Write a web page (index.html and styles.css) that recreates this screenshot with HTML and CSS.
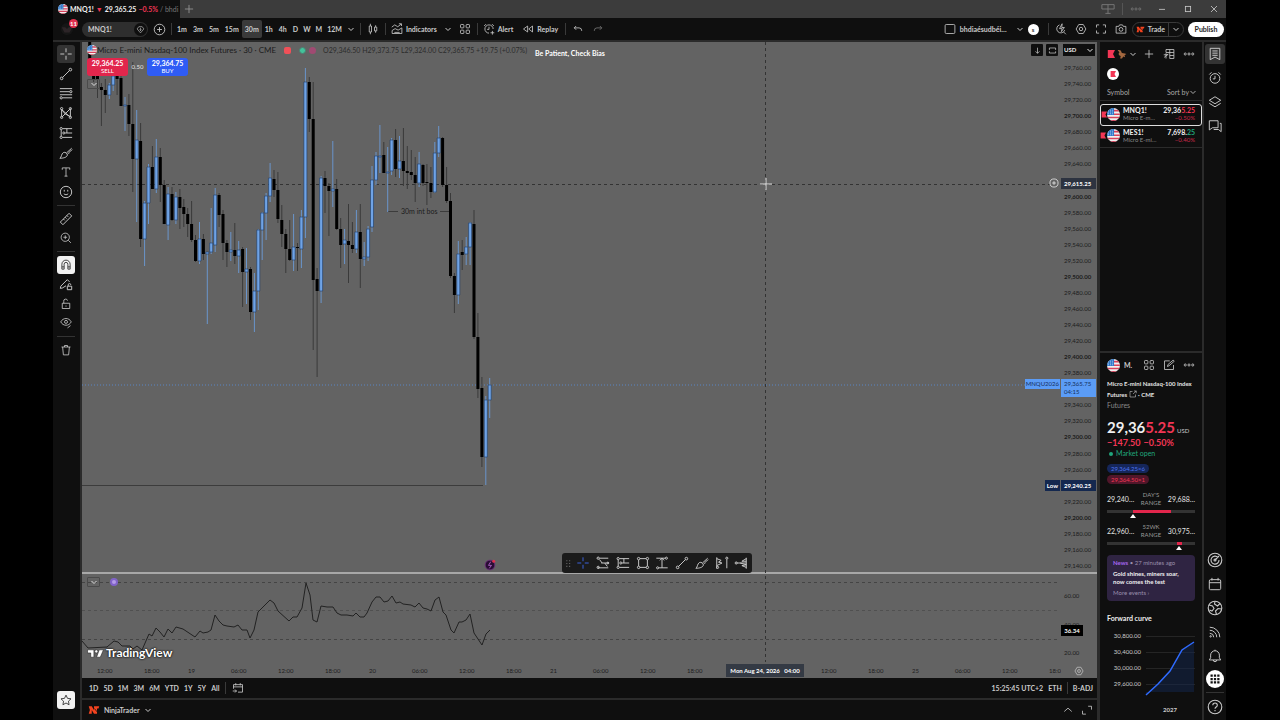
FILE: index.html
```
<!DOCTYPE html>
<html lang="en">
<head>
<meta charset="utf-8">
<title>MNQ1! 29,365.25</title>
<link rel="stylesheet" href="styles.css">
</head>
<body>
<svg class="defs" aria-hidden="true">
  <symbol id="flag" viewBox="0 0 12 12"><clipPath id="fc"><circle cx="6" cy="6" r="6"/></clipPath><g clip-path="url(#fc)"><path fill="#f0f0f0" stroke="none" d="M0 0h12v12H0z"/><path fill="#d8405a" stroke="none" d="M6 1.500h6v1.700H6zM6 5h6v1.500H6zM0 8h12v1.500H0zM0 11h12v1H0z"/><path fill="#2f78c8" stroke="none" d="M0 0h6.500v6.500H0z"/><path stroke="#cfe2ff" stroke-width=".7" stroke-dasharray=".8 1" d="M1 2h5M1 3.700h5M1 5.300h5"/></g></symbol>
  <symbol id="cross" viewBox="0 0 16 16"><path d="M8 1.500v4.500M8 10v4.500M1.500 8H6M10 8h4.500"/></symbol>
  <symbol id="line" viewBox="0 0 16 16"><path d="M4 12l8-8"/><circle cx="3" cy="13" r="1.500"/><circle cx="13" cy="3" r="1.500"/></symbol>
  <symbol id="fib" viewBox="0 0 16 16"><path d="M1 3h14M1 6.500h11M1 10h14M4 13.500h11"/><circle cx="2.500" cy="13.500" r="1.300"/><circle cx="13.500" cy="6.500" r="1.300"/></symbol>
  <symbol id="pattern" viewBox="0 0 16 16"><path d="M3 12V4l4 5 6-6v9L7 9l-4 4M3 4l10 9"/><circle cx="3" cy="3" r="1.300"/><circle cx="13" cy="3" r="1.300"/><circle cx="3" cy="13" r="1.300"/><circle cx="13" cy="13" r="1.300"/></symbol>
  <symbol id="forecast" viewBox="0 0 16 16"><path d="M4 3h11M7 8h8M4 13h11M2.500 4.500v7M9 3v5"/><circle cx="2.500" cy="3" r="1.300"/><circle cx="2.500" cy="13" r="1.300"/><circle cx="5.500" cy="8" r="1.200"/></symbol>
  <symbol id="long" viewBox="0 0 16 16"><path d="M4 2.500h10M6 8h9M2 13.500h12M4 4l3 4M10 8l3 4"/><circle cx="2.500" cy="2.500" r="1.300"/><circle cx="2.500" cy="13" r="1.300"/><circle cx="13.500" cy="8" r="1"/></symbol>
  <symbol id="brush" viewBox="0 0 16 16"><path d="M1 14c2-1 1.500-5 4-6.500 2-1 5 1 4.500 3C9 13 5 14 1 14zM8.500 8l6-5.500M11 9c0-3 2-2 4-5"/></symbol>
  <symbol id="text" viewBox="0 0 16 16"><path d="M3 5V2.500h10V5M8 2.500v11M6 13.500h4"/></symbol>
  <symbol id="smile" viewBox="0 0 16 16"><circle cx="8" cy="8" r="6.500"/><path d="M6 5.500v2M10 5.500v2M5.500 10c1.500 1.500 3.500 1.500 5 0"/></symbol>
  <symbol id="ruler" viewBox="0 0 16 16"><path d="M1.500 11.500l10-10 3 3-10 10zM5 8l1.500 1.500M7 6l1.500 1.500M9 4l1.500 1.500"/></symbol>
  <symbol id="zoomin" viewBox="0 0 16 16"><circle cx="7" cy="7" r="5.500"/><path d="M11 11l3.500 3.500M7 4.500v5M4.500 7h5"/></symbol>
  <symbol id="magnet" viewBox="0 0 16 16"><path d="M2.500 13.500V7a5.500 5.500 0 0 1 11 0v6.500h-3V7a2.500 2.500 0 0 0-5 0v6.500zM2.500 10.500h3M10.500 10.500h3"/></symbol>
  <symbol id="penlock" viewBox="0 0 16 16"><path d="M8 10l-4 2.500-2.500.5.500-2.500L9.500 3 12 5.500M9.500 10.500h5v4h-5zM10.500 10.500V9a1.500 1.500 0 0 1 3 0"/></symbol>
  <symbol id="lock" viewBox="0 0 16 16"><path d="M3 7h10v7H3zM5 7V4.500a2.500 2.500 0 0 1 5-1M8 10v1.500"/></symbol>
  <symbol id="eye" viewBox="0 0 16 16"><path d="M1 6.500c3-6 11-6 14 0-3 6-11 6-14 0zM10 14.500l4-3"/><circle cx="8" cy="6.500" r="2"/></symbol>
  <symbol id="trash" viewBox="0 0 16 16"><path d="M2 4h12M6 4V2h4v2M3.500 4l1 10.500h7l1-10.500"/></symbol>
  <symbol id="star" viewBox="0 0 16 16"><path d="M8 1.500l2 4.300 4.700.6-3.400 3.200.8 4.700L8 12l-4.100 2.300.8-4.700L1.300 6.400 6 5.800z"/></symbol>
  <symbol id="chev" viewBox="0 0 8 8"><path d="M1.500 3L4 5.500 6.500 3"/></symbol>
  <symbol id="chevup" viewBox="0 0 16 16"><path d="M3 10l5-4.500L13 10"/></symbol>
  <symbol id="plus" viewBox="0 0 16 16"><path d="M8 2.500v11M2.500 8h11"/></symbol>
  <symbol id="pluscircle" viewBox="0 0 16 16"><circle cx="8" cy="8" r="6.500"/><path d="M8 5v6M5 8h6"/></symbol>
  <symbol id="gem" viewBox="0 0 16 16"><path d="M5 3h6l3 4-6 7-6-7z"/><path d="M8 5v5M6 8l2 2 2-2"/></symbol>
  <symbol id="candles" viewBox="0 0 16 16"><path d="M3 4h3v8H3zM4.500 1v3M4.500 12v3M10 5.500h3v5h-3zM11.500 3v2.500M11.500 10.500V13"/></symbol>
  <symbol id="indic" viewBox="0 0 16 16"><path d="M1.500 14v-4l4-2.500 4 2 5-3V14zM1 5.500l4-3 4 2.500 4.500-3.500M10.500 1H14v3M4.500 12.500h7"/></symbol>
  <symbol id="grid" viewBox="0 0 16 16"><rect x="2" y="2" width="4.500" height="4.500" rx="1"/><rect x="9.500" y="2" width="4.500" height="4.500" rx="1"/><rect x="2" y="9.500" width="4.500" height="4.500" rx="1"/><rect x="9.500" y="9.500" width="4.500" height="4.500" rx="1"/></symbol>
  <symbol id="alarm" viewBox="0 0 16 16"><path d="M13.500 8a5.500 5.500 0 1 0-5.500 5.500M8 5v3.500H5.500M1.500 4L4 1.500M12 1.500L14.500 4M12.500 10.500v5M10 13h5"/></symbol>
  <symbol id="clock" viewBox="0 0 16 16"><circle cx="8" cy="8.500" r="5.500"/><path d="M8 5.500V9H5.500M1.500 4L4 1.500M12 1.500L14.500 4"/></symbol>
  <symbol id="replay" viewBox="0 0 16 16"><path d="M7.500 4v8L2 8zM14 4v8L9 8z"/></symbol>
  <symbol id="undo" viewBox="0 0 16 16"><path d="M5.500 4L3 6.500 5.500 9M3 6.500h6.500q3.500 0 3.500 4"/></symbol>
  <symbol id="redo" viewBox="0 0 16 16"><path d="M10.500 4L13 6.500 10.500 9M13 6.500H6.500Q3 6.500 3 10.500"/></symbol>
  <symbol id="square" viewBox="0 0 16 16"><rect x="1.500" y="2" width="13" height="12" rx="1.500"/></symbol>
  <symbol id="bolt" viewBox="0 0 16 16"><path d="M6 2.500a5.500 5.500 0 1 0 7 7M11.500 12l3 3M9.500 1L6 7.500h3.500l-1 4L12.500 6H9z"/></symbol>
  <symbol id="hex" viewBox="0 0 16 16"><path d="M5 2h6l3.500 6L11 14H5L1.500 8z"/><circle cx="8" cy="8" r="2.300"/></symbol>
  <symbol id="full" viewBox="0 0 16 16"><path d="M2 6V2.500h3.500M10.500 2.500H14V6M14 10v3.500h-3.500M5.500 13.500H2V10"/></symbol>
  <symbol id="camera" viewBox="0 0 16 16"><path d="M1.500 4.500H5L6 2.500h4l1 2h3.500v9h-13z"/><circle cx="8" cy="8.500" r="2.500"/></symbol>
  <symbol id="nt" viewBox="0 0 16 16"><path fill="#f4431f" stroke="none" d="M1 3h4l3 5V3h7l-1 3h-2v7H8L5 8v5H1l1.500-5z"/><path stroke="#141414" d="M8.500 6l5 6"/></symbol>
  <symbol id="tabs" viewBox="0 0 16 16"><path d="M1 3h14v5H1zM8 3v10M5 13h6"/></symbol>
  <symbol id="dots" viewBox="0 0 16 16"><circle cx="3" cy="8" r="1.400"/><circle cx="8" cy="8" r="1.400"/><circle cx="13" cy="8" r="1.400"/></symbol>
  <symbol id="min" viewBox="0 0 16 16"><path d="M4 8.500h8"/></symbol>
  <symbol id="max" viewBox="0 0 16 16"><rect x="4.500" y="4.500" width="7" height="7"/></symbol>
  <symbol id="close" viewBox="0 0 16 16"><path d="M4 4l8 8M12 4l-8 8"/></symbol>
  <symbol id="down" viewBox="0 0 16 16"><path d="M8 3v10M4.500 9.500L8 13l3.500-3.500"/></symbol>
  <symbol id="snap" viewBox="0 0 16 16"><path d="M2.500 7V3.500h11V7M2.500 9.500v3h11v-3"/></symbol>
  <symbol id="redflag" viewBox="0 0 10 10"><path fill="#f23655" stroke="none" d="M1 0h9L7.500 5 10 10H1z"/></symbol>
  <symbol id="squirrel" viewBox="0 0 16 16"><path fill="#a4683f" stroke="none" d="M1 2c3-1 6 0 6 3 1 2 5 1 8 3l-3 2 1 3-3-1-2 3H5l1-4C2 10 2 7 4 5z"/></symbol>
  <symbol id="table" viewBox="0 0 16 16"><path d="M4 6V2h10.500v12H9M4 6h10.500M9 2v12M9 10h5.500M1 9h6M4 7v7M1.500 12.500L7 8"/></symbol>
  <symbol id="list" viewBox="0 0 16 16"><path d="M2.500 1.500h11v13L8 11.500l-5.500 3zM5 4.500h6M5 7h6M5 9.500h6"/></symbol>
  <symbol id="layers" viewBox="0 0 16 16"><path d="M8 2l6.500 4L8 10 1.500 6zM1.500 9.500L8 13.500l6.500-4"/></symbol>
  <symbol id="chat" viewBox="0 0 16 16"><path d="M1.500 2h10v8H5l-3.500 2.500zM13.500 5h1.500v9.500L12 12H6.500"/></symbol>
  <symbol id="target" viewBox="0 0 16 16"><circle cx="8" cy="8" r="6.800"/><path d="M11 5.500A4 4 0 1 0 12 8M8 8l4-4"/><circle cx="8" cy="8" r="1"/></symbol>
  <symbol id="cal" viewBox="0 0 16 16"><rect x="1.500" y="3" width="13" height="11.500" rx="1.500"/><path d="M1.500 6.500h13M4.500 1v3M11.500 1v3"/></symbol>
  <symbol id="globe" viewBox="0 0 16 16"><circle cx="8" cy="8" r="6.800"/><path d="M2 5l3.500 1L7 8.500 5 11l-2.500-1M8 1.500L7.500 4l3 2 2.500-2.500M9.500 14.500l-1-3.500 2.500-2.500 3.500.5"/></symbol>
  <symbol id="rss" viewBox="0 0 16 16"><path d="M2 2.500A11.500 11.500 0 0 1 13.500 14M2 6a8 8 0 0 1 8 8M2 9.500A4.500 4.500 0 0 1 6.500 14"/><circle cx="3" cy="13" r=".8"/></symbol>
  <symbol id="bell" viewBox="0 0 16 16"><path d="M1.500 12.500h13L13 10V7A5 5 0 0 0 3 7v3zM6 12.500a2 2 0 0 0 4 0M8 2V.8"/></symbol>
  <symbol id="apps" viewBox="0 0 16 16"><path fill="#111" stroke="none" d="M2 2h3v3H2zM6.500 2h3v3h-3zM11 2h3v3h-3zM2 6.500h3v3H2zM6.500 6.500h3v3h-3zM11 6.500h3v3h-3zM2 11h3v3H2zM6.500 11h3v3h-3zM11 11h3v3h-3z"/></symbol>
  <symbol id="help" viewBox="0 0 16 16"><circle cx="8" cy="8" r="6.800"/><path d="M5.800 6.200c0-3 4.500-3 4.500 0C10.300 8 8 8 8 9.800M8 11v1.300"/></symbol>
  <symbol id="edit" viewBox="0 0 16 16"><path d="M9 2.500H2v11.500h12V8M6 10l.5-2.500 7-6 1.500 1.500-7 6z"/></symbol>
  <symbol id="ext" viewBox="0 0 16 16"><path d="M7 3H2v11h11V9M10 2h4.500v4.500M14.500 2L8 8"/></symbol>
  <symbol id="goto" viewBox="0 0 16 16"><path d="M2 9V3.500h12v10H8M2 6.500h12M5 1.500v3M11 1.500v3M1 12h5M4 10l2 2-2 2"/></symbol>
  <symbol id="expand" viewBox="0 0 16 16"><path d="M9.500 3H14v4.500M2 9v4.500h4.500"/></symbol>
  <symbol id="rect" viewBox="0 0 16 16"><path d="M3 4.500v7M13 4.500v7M4.500 3h7M4.500 13h7"/><circle cx="3" cy="3" r="1.400"/><circle cx="13" cy="3" r="1.400"/><circle cx="3" cy="13" r="1.400"/><circle cx="13" cy="13" r="1.400"/></symbol>
  <symbol id="range" viewBox="0 0 16 16"><path d="M1.500 2.500h10M8 2.500v11M4.500 13.500h10M5.500 5L8 2.500 10.500 5"/><circle cx="13" cy="2.500" r="1.200"/><circle cx="3" cy="13.500" r="1.200"/></symbol>
  <symbol id="profile" viewBox="0 0 16 16"><path d="M2 1.500v13M2 3l5 2-3 2 4 1-6 3M13.500 4v10"/><circle cx="13.500" cy="2.500" r="1.200"/><circle cx="3" cy="13" r="1.200"/></symbol>
  <symbol id="anchored" viewBox="0 0 16 16"><path d="M14 2v12.500M14 3l-5 3h5M14 8H7l7 2M14 10l-5 1 5 2M3 8h4"/><circle cx="2.500" cy="8" r="1.200"/></symbol>
  <symbol id="grip" viewBox="0 0 16 16"><path fill="#666" stroke="none" d="M4 2h2v2H4zM9 2h2v2H9zM4 7h2v2H4zM9 7h2v2H9zM4 12h2v2H4zM9 12h2v2H9z"/></symbol>
</svg>

<div class="app">
  <header class="tabbar">
    <div class="tab"><svg class="i10"><use href="#flag"/></svg><b>MNQ1!</b><span class="red">▼</span><b>29,365.25</b><b class="red">−0.5%</b><span class="fade">/ bhdi</span></div>
    <button class="newtab" aria-label="New tab"><svg class="i12"><use href="#plus"/></svg></button>
    <div class="window">
      <button class="dim" aria-label="Layouts"><svg class="i14"><use href="#tabs"/></svg></button><i class="vs"></i>
      <button class="dim" aria-label="More"><svg class="i12"><use href="#dots"/></svg></button>
      <button aria-label="Minimize"><svg class="i12"><use href="#min"/></svg></button>
      <button aria-label="Maximize"><svg class="i12"><use href="#max"/></svg></button>
      <button aria-label="Close"><svg class="i12"><use href="#close"/></svg></button>
    </div>
  </header>

  <nav class="topbar">
    <div class="me"><svg class="i14" viewBox="0 0 16 16"><circle cx="8" cy="8" r="7" fill="#161616" stroke="none"/><path fill="#2c2427" stroke="none" d="M2 6h4l2 2 2-2h4l-3 6H5z"/></svg><span class="badge">11</span></div>
    <div class="search"><input aria-label="Symbol search" value="MNQ1!"><button class="gem" aria-label="Symbol details"><svg class="i9"><use href="#gem"/></svg></button></div>
    <button class="add" aria-label="Compare"><svg class="i13"><use href="#pluscircle"/></svg></button><i class="vs"></i>
    <div class="frames"><button>1m</button><button>3m</button><button>5m</button><button>15m</button><button class="on">30m</button><button>1h</button><button>4h</button><button>D</button><button>W</button><button>M</button><button>12M</button></div>
    <button class="cv" aria-label="Intervals"><svg class="i8"><use href="#chev"/></svg></button><i class="vs"></i>
    <button class="sq" aria-label="Chart type"><svg class="i12"><use href="#candles"/></svg></button><i class="vs"></i>
    <button class="lab"><svg class="i12"><use href="#indic"/></svg>Indicators</button>
    <button class="cv" aria-label="Favorites"><svg class="i8"><use href="#chev"/></svg></button>
    <button class="sq" aria-label="Templates"><svg class="i12"><use href="#grid"/></svg></button><i class="vs"></i>
    <button class="lab"><svg class="i12"><use href="#alarm"/></svg>Alert</button>
    <button class="lab rep"><svg class="i12"><use href="#replay"/></svg>Replay</button><i class="vs"></i>
    <button class="sq" aria-label="Undo"><svg class="i12"><use href="#undo"/></svg></button>
    <button class="sq dim" aria-label="Redo"><svg class="i12"><use href="#redo"/></svg></button>
    <div class="right">
      <button class="lab wide"><svg class="i12"><use href="#square"/></svg>bhdiaésudbéi…</button>
      <button class="cv" aria-label="Layout menu"><svg class="i8"><use href="#chev"/></svg></button>
      <span class="av">s</span><i class="vs"></i>
      <button class="sq" aria-label="Quick search"><svg class="i12"><use href="#bolt"/></svg></button>
      <button class="sq" aria-label="Settings"><svg class="i12"><use href="#hex"/></svg></button>
      <button class="sq" aria-label="Fullscreen"><svg class="i12"><use href="#full"/></svg></button>
      <button class="sq" aria-label="Snapshot"><svg class="i12"><use href="#camera"/></svg></button>
      <div class="trade"><button><svg class="i9"><use href="#nt"/></svg>Trade</button><button aria-label="Trade menu"><svg class="i8"><use href="#chev"/></svg></button></div>
      <button class="publish">Publish</button>
    </div>
  </nav>

  <main class="main">
    <aside class="tools">
      <div class="g g1">
        <button class="on" aria-label="Cross"><svg class="i14"><use href="#cross"/></svg></button>
        <button aria-label="Trend line"><svg class="i14"><use href="#line"/></svg></button>
        <button aria-label="Fibonacci"><svg class="i14"><use href="#fib"/></svg></button>
        <button aria-label="Patterns"><svg class="i14"><use href="#pattern"/></svg></button>
        <button aria-label="Forecast"><svg class="i14"><use href="#forecast"/></svg></button>
        <button aria-label="Brush"><svg class="i14"><use href="#brush"/></svg></button>
        <button aria-label="Text"><svg class="i12"><use href="#text"/></svg></button>
        <button aria-label="Icons"><svg class="i14"><use href="#smile"/></svg></button>
      </div><hr>
      <div class="g g2">
        <button aria-label="Measure"><svg class="i14"><use href="#ruler"/></svg></button>
        <button aria-label="Zoom in"><svg class="i12"><use href="#zoomin"/></svg></button>
      </div><hr>
      <div class="g g3">
        <button class="white" aria-label="Magnet"><svg class="i12"><use href="#magnet"/></svg></button>
        <button aria-label="Stay in drawing mode"><svg class="i14"><use href="#penlock"/></svg></button>
        <button aria-label="Lock"><svg class="i12"><use href="#lock"/></svg></button>
        <button aria-label="Hide"><svg class="i12"><use href="#eye"/></svg></button>
      </div><hr>
      <button aria-label="Remove"><svg class="i12"><use href="#trash"/></svg></button>
      <button class="white last" aria-label="Favorites"><svg class="i12"><use href="#star"/></svg></button>
    </aside>

    <section class="center">
      <div class="chart">
        <svg class="plot" id="plot"></svg>

        <div class="legend">
          <div class="row title"><svg class="i10"><use href="#flag"/></svg><span class="name">Micro E-mini Nasdaq-100 Index Futures · 30 · CME</span><i class="dot sqr"></i><i class="dot grn"></i><i class="dot pnk"></i><span class="ohlc">O29,346.50 H29,373.75 L29,324.00 C29,365.75 +19.75 (+0.07%)</span></div>
          <div class="row quote"><button class="sell"><b>29,364.25</b>SELL</button><span>0.50</span><button class="buy"><b>29,364.75</b>BUY</button></div>
          <button class="fold" aria-label="Collapse"><svg class="i8"><use href="#chev"/></svg></button>
        </div>
        <div class="note">Be Patient, Check Bias</div>
        <div class="bos">30m int bos</div>
        <div class="corner">
          <button aria-label="Scroll down"><svg class="i9"><use href="#down"/></svg></button>
          <button aria-label="Maximize pane"><svg class="i9"><use href="#snap"/></svg></button>
          <label class="cur"><select aria-label="Currency"><option>USD</option></select><svg class="i8"><use href="#chev"/></svg></label>
        </div>
        <div class="prices" id="prices"></div>
        <div class="tag cursor"><svg class="i10"><use href="#pluscircle"/></svg><b>29,615.25</b></div>
        <div class="tag now"><span>MNQU2026</span><span>29,365.75<br>04:15</span></div>
        <div class="tag low"><b>Low</b><b>29,240.25</b></div>
        <div class="event"><svg class="i12" viewBox="0 0 16 16"><circle cx="8" cy="8" r="6.500" fill="#2a0c35" stroke="#722f80"/><path d="M9 3.500L6 8.500h4l-3 4" stroke="#b86bd0"/><circle cx="13" cy="3" r="2" fill="#e0314f" stroke="none"/></svg></div>
        <div class="drawbar">
          <svg class="i9"><use href="#grip"/></svg>
          <button class="blue" aria-label="Cross"><svg class="i14"><use href="#cross"/></svg></button>
          <button aria-label="Long position"><svg class="i14"><use href="#long"/></svg></button>
          <button aria-label="Short position"><svg class="i14"><use href="#forecast"/></svg></button>
          <button aria-label="Rectangle"><svg class="i14"><use href="#rect"/></svg></button>
          <button aria-label="Price range"><svg class="i14"><use href="#range"/></svg></button>
          <button aria-label="Trend line"><svg class="i14"><use href="#line"/></svg></button>
          <button aria-label="Brush"><svg class="i14"><use href="#brush"/></svg></button>
          <button aria-label="Volume profile"><svg class="i14"><use href="#profile"/></svg></button>
          <button aria-label="Anchored profile"><svg class="i14"><use href="#anchored"/></svg></button>
        </div>
        <div class="subpane">
          <button class="fold" aria-label="Collapse"><svg class="i8"><use href="#chev"/></svg></button><i class="purple"></i>
        </div>
        <div class="levels"><span>60.00</span><span>40.00</span><span>20.00</span></div>
        <div class="rsi">36.34</div>
        <div class="brand"><svg viewBox="0 0 32 18"><path d="M1 2h12v14H7V8H1z"/><circle cx="17.500" cy="5" r="3"/><path d="M23 2h8l-6 14h-7z"/></svg>TradingView</div>
        <div class="times" id="times"></div>
        <div class="timetag">Mon Aug 24, 2026 &nbsp; 04:00</div>
        <button class="axisset" aria-label="Axis settings"><svg class="i10"><use href="#hex"/></svg></button>
      </div>
      <div class="ranges">
        <button>1D</button><button>5D</button><button>1M</button><button>3M</button><button>6M</button><button>YTD</button><button>1Y</button><button>5Y</button><button>All</button><i class="vs"></i><button aria-label="Go to"><svg class="i12"><use href="#goto"/></svg></button>
        <div class="right"><button>15:25:45 UTC+2</button><button>ETH</button><i class="vs"></i><button>B-ADJ</button></div>
      </div>
      <div class="broker"><svg class="i12"><use href="#nt"/></svg><b>NinjaTrader</b><svg class="i8"><use href="#chev"/></svg>
        <div class="right"><button aria-label="Open panel"><svg class="i12"><use href="#chevup"/></svg></button><button aria-label="Maximize panel"><svg class="i12"><use href="#expand"/></svg></button></div>
      </div>
    </section>

    <aside class="panel">
      <section class="watch">
        <div class="whead"><svg class="i8"><use href="#redflag"/></svg><svg class="i10"><use href="#squirrel"/></svg><svg class="i8"><use href="#chev"/></svg>
          <div class="right"><button aria-label="Add symbol"><svg class="i12"><use href="#plus"/></svg></button><button aria-label="Advanced view"><svg class="i12"><use href="#table"/></svg></button><button aria-label="More"><svg class="i12"><use href="#dots"/></svg></button></div></div>
        <div class="wflag"><span><svg class="i8"><use href="#redflag"/></svg></span></div>
        <div class="wcols"><span>Symbol</span><button>Sort by<svg class="i8"><use href="#chev"/></svg></button></div>
        <div class="item sel"><svg class="mark"><use href="#redflag"/></svg><svg class="i13"><use href="#flag"/></svg><div><b>MNQ1!</b><small>Micro E-m…</small></div><div class="val"><b>29,36<span class="red">5.25</span></b><small class="red">−0.50%</small></div></div>
        <div class="item"><svg class="mark"><use href="#redflag"/></svg><svg class="i13"><use href="#flag"/></svg><div><b>MES1!</b><small>Micro E-mi…</small></div><div class="val"><b>7,698.<span class="green">25</span></b><small class="red">−0.40%</small></div></div>
      </section>
      <section class="detail">
        <div class="dhead"><svg class="i13"><use href="#flag"/></svg><b>M.</b><div class="right"><button aria-label="Grid"><svg class="i12"><use href="#grid"/></svg></button><button aria-label="Note"><svg class="i12"><use href="#edit"/></svg></button><button aria-label="More"><svg class="i12"><use href="#dots"/></svg></button></div></div>
        <p class="full">Micro E-mini Nasdaq-100 Index<br>Futures <svg class="i8"><use href="#ext"/></svg> · CME</p>
        <p class="kind">Futures</p>
        <div class="big"><b>29,36<span class="red">5.25</span></b><small>USD</small></div>
        <div class="chg red"><span>−147.50</span><span>−0.50%</span></div>
        <div class="open green"><i></i>Market open</div>
        <div class="bid">29,364.25×6</div>
        <div class="ask">29,364.50×1</div>
        <div class="rng"><span>29,240…</span><em>DAY'S RANGE</em><span>29,688…</span></div>
        <div class="bar day"><i></i><u></u></div>
        <div class="rng second"><span>22,960…</span><em>52WK RANGE</em><span>30,975…</span></div>
        <div class="bar year"><i></i><u></u></div>
        <div class="news"><div><b>News</b> • 27 minutes ago</div><strong>Gold shines, miners soar, now comes the test</strong><a href="#more">More events ›</a></div>
        <h2>Forward curve</h2>
        <div class="curve">
          <div class="ys"><span>30,800.00</span><span>30,400.00</span><span>30,000.00</span><span>29,600.00</span></div>
          <svg viewBox="0 0 49 64" preserveAspectRatio="none"><path d="M0 8.500h49M0 24.500h49M0 40.500h49M0 56.500h49" stroke="#252525"/><path d="M0 67L12 56 24 43 36 22l12-8v50H0z" fill="#14284f" opacity=".5" stroke="none"/><path d="M0 67L12 56 24 43 36 22l12-8" stroke="#2f6bff" stroke-width="1.500"/></svg>
        </div>
        <div class="yr">2027</div>
      </section>
    </aside>

    <aside class="strip">
      <button class="on" aria-label="Watchlist"><svg class="i14"><use href="#list"/></svg></button>
      <button aria-label="Alerts"><svg class="i14"><use href="#clock"/></svg></button>
      <button aria-label="Object tree"><svg class="i14"><use href="#layers"/></svg></button>
      <button aria-label="Chats"><svg class="i14"><use href="#chat"/></svg></button>
      <div class="push"></div>
      <button aria-label="Screeners"><svg class="i16"><use href="#target"/></svg></button>
      <button aria-label="Calendars"><svg class="i14"><use href="#cal"/></svg></button>
      <button aria-label="Community"><svg class="i16"><use href="#globe"/></svg></button>
      <button aria-label="News"><svg class="i14"><use href="#rss"/></svg></button>
      <button aria-label="Notifications"><svg class="i14"><use href="#bell"/></svg></button>
      <button class="round" aria-label="Products"><svg class="i12"><use href="#apps"/></svg></button>
      <hr>
      <button aria-label="Help"><svg class="i16"><use href="#help"/></svg></button>
    </aside>
  </main>
</div>
<script src="chart.js"></script>
</body>
</html>
```

FILE: styles.css
```
* { box-sizing: border-box; }
body { margin: 0; background: #000; color: #cacaca; font: 7px/8px "Lato", "Open Sans", sans-serif; }
button, input, select { font: inherit; color: inherit; background: none; border: 0; padding: 0; margin: 0; }
button { display: flex; align-items: center; justify-content: center; white-space: nowrap; }
svg { fill: none; stroke: currentColor; stroke-width: 1.1; flex: none; display: block; }
hr { border: 0; height: 1px; background: #333; margin: 4px 0; width: 18px; flex: none; }
p, h2 { margin: 0; }
.defs { position: absolute; width: 0; height: 0; }
.i8 { width: 8px; height: 8px; stroke-width: 1; }
.i9 { width: 9px; height: 9px; }
.i10 { width: 10px; height: 10px; }
.i12 { width: 12px; height: 12px; }
.i13 { width: 13px; height: 13px; }
.i14 { width: 14px; height: 14px; }
.i16 { width: 16px; height: 16px; }
.red { color: #f23655; }
.green { color: #20a67c; }
.dim { color: #777; }
.vs { width: 1px; height: 12px; background: #3a3a3a; flex: none; }
.right { margin-left: auto; display: flex; align-items: center; }

.app { height: 100vh; margin: 0 54px 0 53px; display: flex; flex-direction: column; background: #2b2b2b; }
.tabbar { height: 18px; display: flex; align-items: center; background: #3c3c3c; flex: none; }
.tab { width: 127px; height: 18px; padding-left: 5px; display: flex; align-items: center; gap: 2px; background: #0f0f0f; white-space: nowrap; overflow: hidden; color: #f0f0f0; }
.fade { color: #777; }
.newtab { width: 18px; color: #999; }
.window { margin-left: auto; display: flex; align-items: center; gap: 14px; padding-right: 6px; }
.window .vs { margin: 0 -7px; background: #555; }

.topbar { height: 22px; margin-bottom: 2px; display: flex; align-items: center; background: #0f0f0f; flex: none; font-weight: 700; }
.topbar > .vs, .topbar .right > .vs { margin: 0 2px; }
.me { width: 29px; padding-left: 7px; position: relative; }
.badge { position: absolute; left: 16px; top: -3px; width: 9px; height: 9px; border-radius: 5px; background: #e0314f; color: #fff; text-align: center; font-size: 6px; line-height: 9px; }
.search { width: 66px; height: 15px; border-radius: 8px; background: #2e2e2e; display: flex; align-items: center; padding: 0 1px 0 6px; }
.search input { min-width: 0; flex: 1; font-weight: 700; outline: 0; }
.gem { width: 13px; height: 13px; border-radius: 7px; background: #0f0f0f; }
.add { margin: 0 3px 0 5px; }
.frames { display: flex; }
.frames button { padding: 0 3px; height: 18px; border-radius: 2px; }
.frames button:nth-child(n+8) { padding-right: 2px; }
.frames .on { background: #3a3a3a; }
.cv { width: 14px; }
.sq { width: 20px; }
.lab { gap: 3px; padding: 0 4px 0 3px; }
.rep { padding: 0 5px; }
.wide { gap: 4px; padding-right: 6px; }
.av { width: 11px; height: 11px; border-radius: 6px; background: #fff; color: #333; text-align: center; line-height: 11px; margin: 0 7px 0 1px; font-size: 6px; }
.trade { display: flex; border: 1px solid #3a3a3a; border-radius: 8px; height: 15px; margin: 0 4px 0 1px; }
.trade button { padding: 0 3px; gap: 3px; }
.trade button + button { border-left: 1px solid #3a3a3a; }
.publish { background: #fff; color: #222; height: 15px; border-radius: 8px; width: 36px; margin-right: 2px; }

.main { flex: 1; min-height: 0; display: flex; }
.tools { width: 27px; margin-right: 2px; background: #0f0f0f; display: flex; flex-direction: column; align-items: center; padding: 3px 1px 11px 0; }
.tools button { width: 18px; height: 18px; border-radius: 3px; }
.g { display: flex; flex-direction: column; justify-content: space-between; }
.g1 { height: 156px; }
.g2 { height: 37px; }
.g3 { height: 76px; }
.on { background: #333; }
.tools .white { background: #f2f2f2; color: #222; }
.tools .last { margin-top: auto; }

.center { flex: 1; min-width: 0; display: flex; flex-direction: column; margin-right: 3px; }
.chart { flex: 1; min-height: 0; position: relative; background: #636363; overflow: hidden; color: #1c1c1c; }
.plot { position: absolute; width: 100%; height: 100%; }
.legend { position: absolute; left: 5px; top: 3px; }
.row { display: flex; align-items: center; white-space: nowrap; }
.title { height: 10px; }
.name { font-size: 8px; }
.dot { width: 7px; height: 7px; border-radius: 4px; flex: none; }
.sqr { background: #f05058; border-radius: 2px; margin-left: 8px; }
.grn { background: #43c39b; margin-left: 8px; border: 1px solid #4b8071; }
.pnk { background: #a04a72; margin: 0 7px 0 3px; }
.ohlc { color: #2c2c2c; }
.quote { color: #e6e6e6; gap: 3px; font-size: 6px; margin-top: 3px; }
.quote span { width: 13px; text-align: center; }
.sell, .buy { flex-direction: column; width: 41px; height: 18px; border-radius: 3px; color: #fff; font-size: 6px; }
.sell b, .buy b { font-size: 7px; }
.sell { background: #e2264c; }
.buy { background: #2f5cf5; }
.fold { width: 13px; height: 10px; border: 1px solid #4a4a4a; border-radius: 1px; color: #ddd; margin-top: 3px; }
.note { position: absolute; left: 453px; top: 7px; color: #fff; font-weight: 700; }
.bos { position: absolute; left: 319px; top: 165px; }
.corner { position: absolute; right: 2px; top: 2px; display: flex; gap: 3px; color: #e8e8e8; }
.corner button { width: 12px; height: 12px; background: #0f0f0f; border-radius: 1px; }
.cur { display: flex; align-items: center; width: 32px; height: 12px; background: #0f0f0f; margin-left: 2px; padding: 0 1px; font-weight: 700; }
.cur select { appearance: none; flex: 1; min-width: 0; font-size: 6px; }
.prices { position: absolute; right: 0; top: 22px; width: 33px; height: 506px; display: flex; flex-direction: column; justify-content: space-between; font-size: 6px; }
.levels { position: absolute; right: 0; bottom: 21px; width: 33px; height: 65px; display: flex; flex-direction: column; justify-content: space-between; font-size: 6px; }
.tag { position: absolute; right: 1px; display: flex; gap: 1px; font-size: 6px; line-height: 11px; color: #fff; }
.tag > :last-child { width: 35px; padding-left: 3px; }
.cursor { top: 136px; gap: 2px; }
.cursor b { background: #2d3340; }
.now { top: 337px; line-height: 8px; color: #16305c; align-items: flex-start; }
.now span { background: #5b9cf6; padding: 1px; }
.low { top: 438px; }
.low b { background: #14284f; padding: 0 2px; }
.event { position: absolute; left: 402px; top: 517px; }
.drawbar { position: absolute; left: 480px; top: 511px; height: 20px; width: 190px; padding: 0 1px 0 2px; background: #1b1b1b; border-radius: 3px; color: #ccc; display: flex; align-items: center; justify-content: space-between; z-index: 1; }
.drawbar button { width: 19px; height: 18px; }
.drawbar .blue { color: #3b62e0; }
.subpane { position: absolute; left: 5px; top: 532px; display: flex; gap: 10px; align-items: flex-end; }
.purple { width: 8px; height: 8px; border-radius: 4px; border: 2px solid #8163c9; background: #b49be8; margin-bottom: 1px; }
.rsi { position: absolute; right: 14px; bottom: 42px; width: 22px; height: 11px; line-height: 11px; background: #000; color: #fff; font-weight: 700; font-size: 6px; text-align: center; }
.brand { position: absolute; left: 5px; bottom: 17px; display: flex; align-items: center; gap: 2px; color: #fff; font-size: 12px; line-height: 16px; font-weight: 700; text-shadow: 0 0 2px #111, 0 0 2px #111; }
.brand svg { width: 17px; height: 11px; fill: #fff; stroke: #222; }
.times { position: absolute; left: 15px; bottom: 3px; width: 964px; display: flex; font-size: 6px; overflow: hidden; }
.times span { flex: none; width: 47px; }
.times .pm { width: 44px; }
.times .date { width: 43px; }
.timetag { position: absolute; left: 644px; bottom: 1px; width: 78px; height: 13px; line-height: 13px; background: #343a44; color: #fff; font-weight: 700; font-size: 6px; text-align: center; }
.axisset { position: absolute; right: 13px; bottom: 2px; color: #ccc; }
.ranges { height: 20px; display: flex; align-items: center; background: #0f0f0f; padding: 0 4px 0 7px; gap: 5px; font-weight: 700; }
.ranges .right { gap: 5px; }
.ranges > .vs { margin: 0 1px; }
.broker { height: 20px; margin-top: 2px; display: flex; align-items: center; background: #0f0f0f; padding: 0 4px 0 6px; gap: 4px; }
.broker .right { gap: 7px; }

.panel { width: 102px; margin-right: 2px; display: flex; flex-direction: column; gap: 2px; }
.watch { height: 309px; background: #0f0f0f; }
.whead { display: flex; align-items: center; height: 24px; padding: 0 7px; gap: 2px; }
.whead .right, .dhead .right { gap: 8px; }
.wflag { height: 16px; padding-left: 7px; }
.wflag span { width: 12px; height: 12px; border-radius: 6px; background: #fff; display: flex; align-items: center; justify-content: center; margin-top: 2px; }
.wflag .i8 { width: 6px; height: 6px; }
.wcols { height: 17px; display: flex; align-items: center; justify-content: space-between; padding: 0 5px 0 7px; border-bottom: 1px solid #2b2b2b; margin-bottom: 3px; color: #a8a8a8; }
.item { height: 22px; display: flex; align-items: center; padding: 0 7px 2px 0; border-bottom: 1px solid #2b2b2b; }
.item.sel { border: 1px solid #ddd; border-radius: 3px; padding-right: 6px; }
.item b, .item small { display: block; font-size: 7px; white-space: nowrap; }
.item b { color: #eee; }
.item small { color: #8a8a8a; font-size: 6px; }
.item small.red { color: #c92a4a; }
.mark { width: 6px; height: 7px; margin-right: 1px; }
.sel .mark { margin-right: 0; }
.item .i13 { margin-right: 3px; }
.val { margin-left: auto; text-align: right; }
.detail { flex: 1; background: #0f0f0f; padding: 4px 7px 0; }
.dhead { display: flex; align-items: center; height: 16px; gap: 4px; }
.full { font-size: 6px; font-weight: 700; line-height: 11px; margin-top: 5px; color: #e4e4e4; white-space: nowrap; }
.full svg { display: inline-block; vertical-align: -1px; }
.kind { color: #8a8a8a; line-height: 11px; }
.big { display: flex; align-items: baseline; gap: 2px; margin-top: 8px; line-height: 17px; }
.big b { font-size: 15px; color: #eee; }
.big small { font-size: 6px; }
.chg { font-size: 9px; line-height: 11px; display: flex; gap: 3px; margin-top: -2px; font-weight: 700; }
.open { display: flex; align-items: center; gap: 3px; line-height: 11px; padding-left: 2px; }
.open i { width: 4px; height: 4px; border-radius: 2px; background: currentColor; }
.bid, .ask { width: 42px; height: 9px; line-height: 9px; border-radius: 5px; text-align: center; font-size: 6px; margin-top: 2px; }
.bid { background: #15265a; color: #4c74f0; margin-top: 5px; }
.ask { background: #51162a; color: #f23655; }
.rng { display: flex; align-items: center; justify-content: space-between; margin-top: 6px; height: 17px; color: #e4e4e4; }
.rng.second { margin-top: 4px; }
.rng em { font-style: normal; font-size: 6px; color: #999; width: 24px; text-align: center; }
.bar { height: 8px; position: relative; border-top: 3px solid #333; margin-top: 3px; }
.bar i { position: absolute; top: -3px; height: 3px; background: #e2264c; }
.bar u { position: absolute; top: 1px; border: 3px solid transparent; border-top: 0; border-bottom: 4px solid #fff; }
.day i { left: 29%; width: 44%; }
.day u { left: 26%; }
.year { margin-bottom: 5px; }
.year i { left: 79%; width: 6%; }
.year u { left: 78%; }
.news { background: #2f2442; border-radius: 4px; height: 46px; padding: 4px 6px; color: #9a90ac; font-size: 6px; }
.news b { color: #a566ee; }
.news strong { display: block; color: #f0f0f0; margin: 3px 0; }
.news a { color: inherit; text-decoration: none; }
.detail h2 { font-size: 7px; line-height: 8px; margin: 13px 0 6px; color: #eee; }
.curve { display: flex; }
.curve .ys { width: 39px; padding: 4px 5px 0 0; text-align: right; font-size: 6px; line-height: 16px; color: #ccc; margin-top: -4px; }
.ys span { display: block; }
.curve svg { flex: 1; min-width: 0; height: 64px; overflow: visible; }
.yr { text-align: center; padding-left: 38px; margin-top: 14px; font-weight: 700; font-size: 6px; }

.strip { width: 22px; background: #0f0f0f; display: flex; flex-direction: column; align-items: center; padding: 2px 0 3px; gap: 4px; }
.strip button { width: 20px; height: 20px; border-radius: 3px; flex: none; }
.strip hr { margin: 0; }
.push { flex: 1; }
.strip .round { background: #fff; border-radius: 10px; width: 18px; height: 18px; }
```

FILE: chart.js
```
// Each bar: [high, body top, body bottom, low, rising]
const bars = [
[0,0,18,20,0],[28,34,38,40,0],[33,34,37,56,0],[41,45,48,84,0],[37,48,53,71,0],[41,43,53,57,1],[32,34,43,49,1],[30,32,37,53,0],[34,36,64,64,0],[55,63,64,89,1],[52,63,82,94,0],[20,82,117,150,0],[68,98,117,180,1],[81,99,197,205,0],[159,161,197,224,1],[122,125,161,182,1],[104,125,147,147,0],[97,115,147,151,1],[106,115,143,160,0],[138,143,182,182,0],[145,152,183,198,1],[145,152,178,179,0],[150,155,178,182,1],[147,155,166,187,0],[157,165,172,185,0],[166,172,182,195,0],[159,182,198,200,0],[193,198,219,220,0],[180,197,219,222,1],[192,197,212,218,0],[210,210,212,282,1],[166,201,210,212,1],[146,153,203,210,1],[151,153,173,185,0],[168,172,201,218,0],[198,201,210,225,0],[190,208,210,219,1],[181,208,214,222,0],[199,208,214,231,1],[205,207,230,265,0],[206,227,230,262,1],[225,227,270,278,0],[231,249,270,290,1],[187,188,249,268,1],[170,171,188,218,1],[151,154,171,198,1],[121,136,154,160,1],[128,137,148,155,0],[130,148,177,181,0],[163,178,192,205,0],[187,192,207,231,0],[178,207,218,219,0],[172,205,218,229,1],[201,205,206,229,0],[168,175,207,226,1],[26,40,175,196,1],[35,40,77,90,0],[40,77,238,308,0],[226,237,249,335,0],[134,136,249,261,1],[129,136,144,171,0],[141,144,149,194,0],[99,147,149,165,1],[137,147,187,188,0],[176,187,203,226,0],[187,198,202,222,1],[162,199,203,241,0],[180,203,207,211,0],[168,190,207,211,1],[162,190,217,246,0],[200,215,217,224,1],[184,187,215,219,1],[124,138,185,190,1],[110,114,138,143,1],[83,114,115,131,1],[100,113,131,131,0],[105,130,131,170,1],[96,98,129,133,1],[87,98,127,135,0],[94,119,127,136,1],[86,119,129,144,0],[104,129,131,147,0],[108,130,133,138,0],[115,133,141,160,0],[110,122,141,145,1],[122,123,141,144,0],[122,140,141,163,0],[125,141,150,156,0],[100,111,150,151,1],[84,96,111,115,1],[95,96,143,145,0],[125,143,159,161,0],[151,159,234,236,0],[231,234,253,271,0],[199,212,253,262,1],[198,210,213,228,0],[195,205,212,223,1],[180,181,205,223,1],[168,182,295,297,0],[271,295,347,356,0],[335,346,415,425,0],[354,358,415,443,1],[336,343,358,376,1]
];
const last = 407.7, step = 3.922;
let up = '', upWick = '', dn = '', dnWick = '';
bars.forEach((b, i) => {
  const x = last - (bars.length - 1 - i) * step;
  const wick = `M${x.toFixed(1)} ${b[0]}V${b[3]}`;
  const h = Math.max(b[2] - b[1], 1);
  const body = `M${(x - 1.5).toFixed(1)} ${b[1]}h3v${h}h-3z`;
  if (b[4]) { up += body; upWick += wick; } else { dn += body; dnWick += wick; }
});
const rsi = '0,599 6,606 25,605 32,599 36,600 40,604 48,604 51,607 55,604 60,608 67,592 70,594 74,586 78,590 82,595 86,587 90,591 94,585 101,587 113,595 118,589 121,591 126,590 129,588 133,573 137,579 141,583 145,584 152,585 156,583 160,588 165,588 168,596 172,588 176,570 188,558 192,561 196,569 207,579 211,575 215,575 220,566 224,541 228,553 231,578 235,580 239,564 245,565 251,565 255,571 259,573 265,573 271,574 274,571 278,575 282,575 285,571 290,560 294,555 298,555 302,560 306,559 310,554 314,561 318,560 321,562 329,563 333,565 337,561 341,566 345,567 349,569 353,558 357,555 361,570 364,573 369,588 372,591 377,580 380,580 384,578 388,572 392,591 396,597 400,603 404,592 408,588';
document.getElementById('plot').innerHTML = `
<path d="M0 531H1015" stroke="#a8a8a8" stroke-width="2"/>
<path d="M0 540.5H976M0 597.5H976" stroke="#444" stroke-width="1" stroke-dasharray="3 3"/>
<path d="M0 568.5H976" stroke="#505050" stroke-width="1" stroke-dasharray="3 3"/>
<path d="M0 343H945" stroke="#5b86c4" stroke-width="1" stroke-dasharray="1 2"/>
<path d="M0 443.5H401M306 169.500H316M358 169.500H368" stroke="#3c3c3c" stroke-width="1"/>
<path d="M0 142.500H968M683.500 0V620" stroke="#333" stroke-width="1" stroke-dasharray="3 3"/>
<path d="${dnWick}" stroke="#3a3a3a" stroke-width="1"/>
<path d="${upWick}" stroke="#6a95cc" stroke-width="1"/>
<path d="${dn}" fill="#000" stroke="none"/>
<path d="${up}" fill="#6fa3e6" stroke="#1d3b66" stroke-width=".6"/>
<polyline points="${rsi}" stroke="#222" stroke-width="1"/>
<path d="M678 142H690M684 136V148" stroke="#ddd" stroke-width="1"/>`;

let rows = '';
for (let p = 29760; p >= 29140; p -= 20) {
  // The levels behind the cursor, last-price and low tags stay blank.
  const t = p === 29360 || p === 29240 || p === 29620 ? '&nbsp;' : p.toLocaleString('en-US') + '.00';
  rows += p % 100 ? `<span>${t}</span>` : `<b>${t}</b>`;
}
document.getElementById('prices').innerHTML = rows;

// Labels under the cursor's time tag stay blank.
const days = [['19', '06:00'], ['20', '06:00'], ['21', '06:00'], ['', ''], ['25', '06:00']];
document.getElementById('times').innerHTML = days.map(([d, t]) =>
  `<span>12:00</span><span class="pm">18:00</span><span class="date">${d}</span><span>${t}</span>`).join('') +
  '<span>12:00</span><span class="pm">18:0</span>';
```
